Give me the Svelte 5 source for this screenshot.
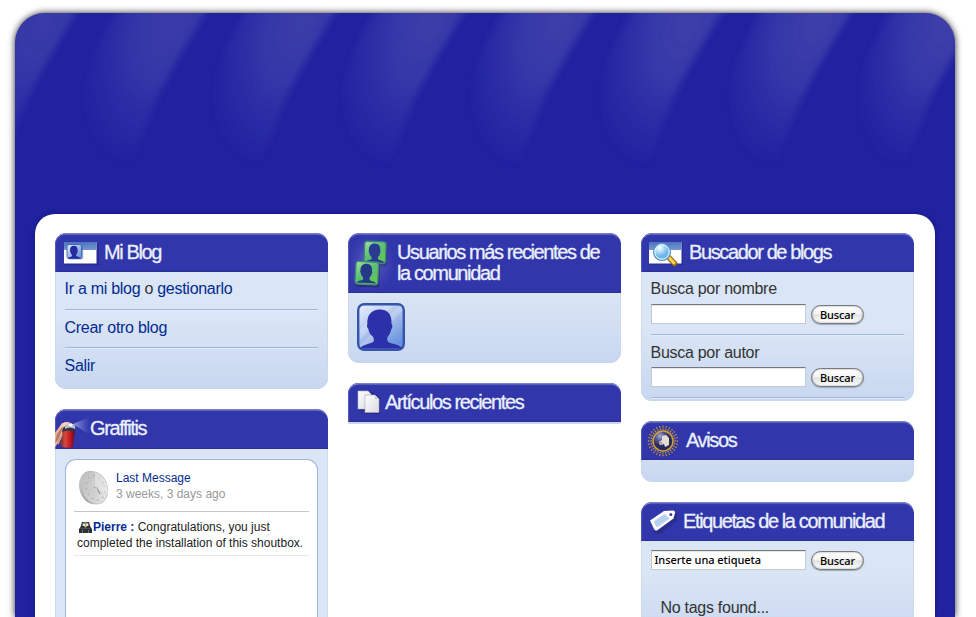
<script>
  const streaks = Array.from({ length: 8 }, (_, i) => ({
    x: (i - 1) * 129,
    o: 0.84 + i * 0.022
  }));
  const rays = Array.from({ length: 28 }, (_, i) => i * (360 / 28));
</script>

{#snippet person()}
  <path d="M0 19.500C1 17.500 5 17.200 6.300 16.300C7 15.600 6.600 14.400 6 13.400C4.600 12.400 4.200 11 4 9.800C3.200 9 3.200 8 3.500 7.300C3.200 3 5.500 .2 9.500 .2S15.300 3 15 7.300C15.600 8 15.500 9.200 14.900 10C14.600 11.600 14 12.800 13.200 13.600C12.800 14.800 12.800 15.800 13.600 16.400C15 17.300 19 17.300 20 19.500Z" />
{/snippet}

<div class="frame">
  <svg class="sky" width="940" height="190" viewBox="0 0 940 190" aria-hidden="true">
    <defs>
      <radialGradient id="glow" gradientUnits="userSpaceOnUse" cx="0" cy="0" r="1" gradientTransform="translate(158 8) rotate(20) scale(84 156)">
        <stop offset="0" stop-color="#6061b2" stop-opacity=".5" />
        <stop offset=".4" stop-color="#5a5bb6" stop-opacity=".42" />
        <stop offset=".75" stop-color="#4e50b8" stop-opacity=".2" />
        <stop offset="1" stop-color="#4547b4" stop-opacity="0" />
      </radialGradient>
      <filter id="soft" x="-20%" y="-20%" width="140%" height="140%"><feGaussianBlur stdDeviation="3.500" /></filter>
    </defs>
    {#each streaks as s}
      <g transform="translate({s.x} 0)" opacity={s.o}>
        <path filter="url(#soft)" fill="url(#glow)" d="M113 -20C84 25 70 55 69 90C68 125 78 155 105 162C122 152 124 127 140 90C155 57 181 15 203 -20Z" />
      </g>
    {/each}
  </svg>

  <main>
    <div class="col">
      <section class="box">
        <header>
          <svg class="i-blog" width="36" height="26" viewBox="0 0 36 26">
            <defs>
              <linearGradient id="bar" x2="0" y2="1"><stop stop-color="#4d73c1" /><stop offset="1" stop-color="#7797d2" /></linearGradient>
              <linearGradient id="card" x2="1" y2="1"><stop stop-color="#e5edfc" /><stop offset="1" stop-color="#5d8cda" /></linearGradient>
            </defs>
            <path fill="#242788" opacity=".7" d="M1 2h34v22.500H1z" />
            <path fill="#fff" d="M0 1h32.500v21.500H0z" />
            <path fill="url(#bar)" d="M0 1h32.500v8H0z" />
            <rect x="4.200" y="4.500" width="15" height="14" rx="2" fill="#5870a5" opacity=".6" />
            <rect x="3" y="3.500" width="14.500" height="14" rx="2" fill="url(#card)" stroke="#4069b6" />
            <g fill="#2529a2" transform="translate(3.800 4.700) scale(.65)">{@render person()}</g>
          </svg>
          <h2>Mi Blog</h2>
        </header>
        <ul class="body links">
          <li><a href="#blog">Ir a mi blog</a> o <a href="#manage">gestionarlo</a></li>
          <li><a href="#new">Crear otro blog</a></li>
          <li><a href="#exit">Salir</a></li>
        </ul>
      </section>

      <section class="box grow">
        <header class="tall">
          <svg class="i-spray" width="35" height="38" viewBox="0 0 35 38">
            <defs>
              <linearGradient id="mist"><stop stop-color="#dce5ff" stop-opacity=".6" /><stop offset="1" stop-color="#8fa0ec" stop-opacity="0" /></linearGradient>
              <linearGradient id="can"><stop stop-color="#682e35" /><stop offset=".35" stop-color="#d84a3c" /><stop offset=".65" stop-color="#c31924" /><stop offset="1" stop-color="#650b19" /></linearGradient>
            </defs>
            <path fill="url(#mist)" d="M18 14L35 7V25Z" />
            <path fill="#eab69e" d="M0 23L7 13L14 12L17 15L10 19L6 29L0 37Z" />
            <path fill="#b87764" d="M2 24L8 16L7 20L3 30L0 33Z" />
            <path fill="#f7d5bf" d="M4 18L10 12L14 12.500L9 16Z" />
            <path fill="url(#can)" d="M8 18Q14 16 20 20L18 37Q11 39 5 36Z" />
            <path fill="#303445" d="M8 18Q12 14 20 17L19 22Q13 19 7 22Z" />
            <path fill="#b9bdc6" d="M10 17Q12 12 18 14Q21 15 20 19Q15 16 10 19Z" />
            <path fill="#fff" d="M13 15L16 13L18 15L16 17Z" />
            <path stroke="#d39c87" stroke-width="2" d="M7 24L5 29M5 28L3 34" />
          </svg>
          <h2>Graffitis</h2>
        </header>
        <div class="body chatwrap">
          <div class="chat">
            <div class="last">
              <svg width="32" height="36" viewBox="0 0 32 36">
                <defs>
                  <linearGradient id="rim" x2="1" y2="1"><stop stop-color="#ddd" /><stop offset=".5" stop-color="#999" /><stop offset="1" stop-color="#d3d3d3" /></linearGradient>
                  <linearGradient id="dial" x2="1" y2="1"><stop stop-color="#bdbdbd" /><stop offset=".6" stop-color="#d3d3d3" /><stop offset="1" stop-color="#f3f3f3" /></linearGradient>
                </defs>
                <ellipse cx="14.500" cy="17.500" rx="13" ry="17" fill="url(#rim)" transform="rotate(-17 14.500 18)" />
                <ellipse cx="16.800" cy="17.800" rx="12.500" ry="16.500" fill="url(#dial)" stroke="#c2c2c2" transform="rotate(-17 17 18)" />
                <ellipse cx="17.500" cy="18" rx="9" ry="12.500" fill="none" stroke="#b0b0b0" stroke-width="1.600" stroke-dasharray="1.5 4.300" transform="rotate(-17 17.500 18)" />
                <path fill="none" stroke="#999" stroke-width="1.200" d="M16 17L19 18L22 24" />
                <path fill="#fff" opacity=".32" d="M17 2Q30 7 31 25L17 18Z" />
              </svg>
              <p><a href="#last">Last Message</a><span>3 weeks, 3 days ago</span></p>
            </div>
            <p class="msg">
              <svg width="13" height="13" viewBox="0 0 13 13">
                <path fill="#171b1d" opacity=".9" d="M3 1H10L11.500 6L13 8V12H0V8L1.500 6Z" />
                <path fill="#929792" d="M4 1.500H9L10 5H3Z" />
                <path fill="#e9e8c8" d="M4 3H6V5H4ZM7 3H9V5H7Z" />
                <path fill="#cab34b" d="M5 5H8L6.500 7Z" />
                <path fill="#697076" d="M2 7.500H11V8H2ZM3 9H4V12H3ZM9 9H10V12H9Z" />
              </svg><a href="#pierre">Pierre :</a> Congratulations, you just completed the installation of this shoutbox.
            </p>
          </div>
        </div>
      </section>
    </div>

    <div class="col">
      <section class="box">
        <header class="double">
          <svg class="i-users" width="46" height="57" viewBox="0 0 46 57">
            <defs>
              <radialGradient id="halo"><stop stop-color="#8b8bd4" stop-opacity=".7" /><stop offset="1" stop-color="#5356c2" stop-opacity="0" /></radialGradient>
              <linearGradient id="green" x2=".8" y2="1"><stop stop-color="#a3e4a1" /><stop offset=".5" stop-color="#5cbd76" /><stop offset="1" stop-color="#64c852" /></linearGradient>
            </defs>
            <ellipse cx="23" cy="29" rx="24" ry="30" fill="url(#halo)" />
            <g transform="translate(16 6.500) rotate(2)">
              <rect x="1" y="2" width="23" height="23" rx="3" fill="#27305f" opacity=".5" />
              <rect x=".7" y=".7" width="21.600" height="21.600" rx="2.500" fill="url(#green)" stroke="#3b827a" stroke-width="1.400" />
              <g fill="#283a91" transform="translate(1.800 2.500) scale(.98)">{@render person()}</g>
            </g>
            <g transform="translate(7.500 26.500) rotate(3)">
              <rect x="1" y="2" width="24" height="24" rx="3" fill="#202557" opacity=".6" />
              <rect x=".7" y=".7" width="22.600" height="22.600" rx="2.500" fill="url(#green)" stroke="#428b7c" stroke-width="1.400" />
              <g fill="#263988" transform="translate(2 2.500) scale(1)">{@render person()}</g>
            </g>
          </svg>
          <h2>Usuarios más recientes de<br />la comunidad</h2>
        </header>
        <div class="body users">
          <svg width="48" height="48" viewBox="0 0 48 48">
            <defs><linearGradient id="face" x2=".7" y2="1"><stop stop-color="#edf2ff" /><stop offset=".45" stop-color="#b5c9ef" /><stop offset="1" stop-color="#6591dc" /></linearGradient></defs>
            <rect x="1.200" y="1.200" width="45.600" height="45.600" rx="6" fill="url(#face)" stroke="#3554ab" stroke-width="2.400" />
            <path fill="#fff" opacity=".2" d="M3 27L27 3H36L3 36ZM3 42L42 3H45V8L8 45H3Z" />
            <g fill="#2c31aa" transform="translate(3 6) scale(2.100 2.030)">{@render person()}</g>
          </svg>
        </div>
      </section>

      <section class="box open">
        <header>
          <svg class="i-pages" width="24" height="24" viewBox="0 0 24 24">
            <defs><linearGradient id="paper" x2="1" y2="1"><stop stop-color="#fff" /><stop offset="1" stop-color="#d8dae0" /></linearGradient></defs>
            <path fill="#22256d" opacity=".6" d="M2 2H15L23 7V24H8V21H2Z" />
            <path fill="url(#paper)" stroke="#b5b8c9" stroke-width=".6" d="M1 1H11L14 4V19H1Z" />
            <path fill="url(#paper)" stroke="#a7aab7" stroke-width=".6" d="M8 5H18L22 9V22.500H8Z" />
            <path fill="#c6c8d0" d="M18 5V9H22Z" />
          </svg>
          <h2>Artículos recientes</h2>
        </header>
        <div class="body sliver"></div>
      </section>
    </div>

    <div class="col">
      <section class="box">
        <header>
          <svg class="i-find" width="36" height="30" viewBox="0 0 36 30">
            <defs><radialGradient id="lens" cx=".35" cy=".25"><stop stop-color="#fff" /><stop offset=".45" stop-color="#b9e1fa" /><stop offset="1" stop-color="#72b5e9" /></radialGradient></defs>
            <path fill="#252a83" opacity=".6" d="M1 2H34V24H1Z" />
            <path fill="#fff" d="M0 1H32.500V22.500H0Z" />
            <path fill="url(#bar)" d="M0 1H32.500V9H0Z" />
            <path stroke="#504a54" stroke-width="5.500" stroke-linecap="round" opacity=".45" d="M21 18L26 23" />
            <path stroke="#9b6810" stroke-width="5" stroke-linecap="round" d="M20 16.500L25.500 22.500" />
            <path stroke="#fbd550" stroke-width="3" stroke-linecap="round" d="M20 16.500L25 22" />
            <circle cx="13" cy="11" r="8.500" fill="url(#lens)" stroke="#5c95cd" stroke-width="1.200" />
            <circle cx="13" cy="11" r="7.200" fill="none" stroke="#e9f8ff" />
          </svg>
          <h2>Buscador de blogs</h2>
        </header>
        <div class="body finder">
          <form>
            <label for="name">Busca por nombre</label>
            <div class="row"><input id="name" /><button type="button">Buscar</button></div>
          </form>
          <form>
            <label for="author">Busca por autor</label>
            <div class="row"><input id="author" /><button type="button">Buscar</button></div>
          </form>
        </div>
      </section>

      <section class="box">
        <header>
          <svg class="i-news" width="32" height="32" viewBox="0 0 32 32">
            <defs><radialGradient id="orb" cx=".35" cy=".25"><stop stop-color="#a9a9d4" /><stop offset=".5" stop-color="#51518e" /><stop offset="1" stop-color="#27285e" /></radialGradient></defs>
            {#each rays as a}
              <path stroke="#b99134" stroke-width="1.300" stroke-dasharray="1.600 .8" d="M16 .8V4.800" transform="rotate({a} 16 16)" />
            {/each}
            <circle cx="16" cy="16" r="10" fill="url(#orb)" stroke="#d6a42d" stroke-width="1.500" />
            <path fill="#e4ddd0" d="M15 11L19 10L22 13V20L18 22L17 19L13 20L12 17L15 15Z" />
            <path fill="#aaa4ae" d="M12 16L15 17L16 20L12 19Z" />
          </svg>
          <h2>Avisos</h2>
        </header>
        <div class="body notice"></div>
      </section>

      <section class="box grow">
        <header>
          <svg class="i-tag" width="30" height="26" viewBox="0 0 30 26">
            <path fill="#23276f" opacity=".5" d="M2 14L16 4L28 5V12L11 25H6Z" />
            <path fill="#fff" d="M1 11.500L15 2L24.500 1.500Q26.500 2 26 4L24.500 9.500L8 21.500Q6 22 5 20Z" />
            <path fill="#b9cff0" d="M4.500 12.500L15.500 5L20.500 9.500L8 18.500Z" />
            <circle cx="21.800" cy="5.500" r="1.500" fill="#383ca0" />
          </svg>
          <h2>Etiquetas de la comunidad</h2>
        </header>
        <div class="body tags">
          <div class="row"><input value="Inserte una etiqueta" aria-label="Etiqueta" /><button type="button">Buscar</button></div>
          <p>No tags found...</p>
        </div>
      </section>
    </div>
  </main>
</div>

<style>
  :global(body) {
    margin: 0;
    background: #fff;
    overflow: hidden;
  }
  .frame {
    position: relative;
    box-sizing: border-box;
    width: 940px;
    height: 604px;
    margin: 13px 0 0 15px;
    padding: 201px 20px 0;
    border-radius: 30px 30px 0 0;
    background: #2022a0;
    box-shadow: 0 0 7px rgba(0, 0, 0, 0.85);
    overflow: hidden;
    font-family: "Liberation Sans", Arial, sans-serif;
    font-size: 16px;
    letter-spacing: -0.280px;
    color: #333;
  }
  .sky {
    position: absolute;
    top: 0;
    left: 0;
  }
  main {
    position: relative;
    box-sizing: border-box;
    display: flex;
    gap: 20px;
    height: 403px;
    padding: 19px 20px 0;
    border-radius: 20px 20px 0 0;
    background: #fff;
    box-shadow: 0 0 5px rgba(12, 14, 90, 0.5);
  }
  .col {
    display: flex;
    flex-direction: column;
    gap: 20px;
    width: 273px;
  }
  .box {
    border-radius: 11px;
    overflow: hidden;
    flex: none;
  }
  .open {
    overflow: visible;
  }
  .grow {
    border-radius: 11px 11px 0 0;
    flex: 1 1 0;
    min-height: 0;
    display: flex;
    flex-direction: column;
  }
  header {
    box-sizing: border-box;
    display: flex;
    flex: none;
    align-items: flex-start;
    height: 39px;
    background: #3136aa;
    border-radius: 11px 11px 0 0;
    box-shadow: inset 0 2px 1px -0.5px #8085cf, inset 1px 0 1px #5559b9, inset 0 -1px 1px #292c91;
  }
  header.tall {
    height: 40px;
  }
  header.double {
    height: 60px;
  }
  header svg {
    flex: none;
  }
  h2 {
    margin: 9px 0 0;
    font-size: 20px;
    font-weight: 400;
    line-height: 21px;
    letter-spacing: -1.380px;
    white-space: nowrap;
    color: #eaf0fc;
    -webkit-text-stroke: 0.300px #eaf0fc;
  }
  .i-blog { margin: 8px 4px 0 9px; }
  .i-spray { margin: 1px 0 0; }
  .i-users { margin: 1px 3px 0 0; }
  .i-pages { margin: 7px 4px 0 9px; }
  .i-find { margin: 8px 4px 0 8px; }
  .i-news { margin: 4px 7px 0 6px; }
  .i-tag { margin: 7px 4px 0 8px; }
  .body {
    box-sizing: border-box;
    margin: 0;
    background: #dae5f5 linear-gradient(#dae5f5, #c8d7f0) bottom / 100% 72px no-repeat;
    box-shadow: inset 1px 0 #ccd9ed, inset -1px 0 #ccd9ed;
  }
  a {
    color: #032b91;
    text-decoration: none;
  }
  .links {
    height: 117px;
    padding: 0 10px;
    list-style: none;
  }
  .links li {
    box-sizing: border-box;
    height: 38px;
    padding-top: 8px;
    line-height: 18px;
    border-bottom: 1px solid #9eb5dc;
    box-shadow: 0 1px #e4edf9;
    text-indent: -0.500px;
  }
  .links li + li {
    padding-top: 9px;
  }
  .links li:last-child {
    border: 0;
    box-shadow: none;
  }
  .chatwrap {
    display: flex;
    flex: 1;
    padding: 10px 10px 0;
    background: #dae5f5;
  }
  .chat {
    box-sizing: border-box;
    flex: 1;
    padding: 0 8px;
    border: 1px solid #9db7e0;
    border-bottom: 0;
    border-radius: 11px 11px 0 0;
    background: #fff;
    font-size: 12px;
    letter-spacing: 0;
  }
  .last {
    box-sizing: border-box;
    display: flex;
    gap: 6px;
    height: 52px;
    padding: 10px 0 0 4px;
    border-bottom: 1px solid #c6c6c6;
  }
  .last p {
    margin: 0;
    line-height: 16px;
  }
  .last a,
  .last span {
    display: block;
  }
  .last span {
    color: #999;
  }
  .msg {
    margin: 0;
    padding: 7px 0 4px 3px;
    line-height: 16px;
    border-bottom: 1px solid #e9e9e9;
    color: #222;
  }
  .msg svg {
    vertical-align: -3px;
    margin-left: 2px;
  }
  .msg a {
    margin-left: 1px;
    font-weight: 700;
  }
  .users {
    height: 70px;
    padding: 10px 9px;
  }
  .sliver {
    height: 2px;
    background: #c8d7ee;
    border-radius: 0 0 11px 11px;
  }
  .finder {
    height: 129px;
    padding: 0 10px;
  }
  form {
    box-sizing: border-box;
    height: 63px;
    padding-top: 8px;
    border-bottom: 1px solid #9eb9dc;
    box-shadow: 0 1px #e2ebf8;
  }
  form + form {
    padding-top: 9px;
  }
  label {
    display: block;
    line-height: 18px;
    text-indent: -0.500px;
  }
  .row {
    display: flex;
    align-items: flex-start;
    gap: 5px;
    margin-top: 6px;
  }
  form + form .row {
    margin-top: 5px;
  }
  input {
    box-sizing: border-box;
    width: 155px;
    height: 20px;
    margin: 0;
    padding: 0 3px 1px 2.500px;
    border: 1px solid #c5c9d0;
    border-top-color: #747980;
    border-radius: 0;
    background: #fff;
    box-shadow: inset 0 1px #e8e8e8;
    font: 500 11px "Noto Sans", sans-serif;
    letter-spacing: -0.050px;
    color: #000;
  }
  button {
    box-sizing: border-box;
    width: 53px;
    height: 19px;
    margin-top: 1px;
    padding: 0;
    border: 1px solid #77797f;
    border-radius: 10px;
    background: linear-gradient(#fff, #f5f5f5 45%, #e3e3e3 52%, #fff);
    box-shadow: inset 0 0 2px #888, 0 1px 1px #9da7b7;
    font: 500 11px/15px "Noto Sans", sans-serif;
    letter-spacing: -0.150px;
    color: #000;
  }
  .notice {
    height: 22px;
    background: linear-gradient(#cfdcf2, #c8d7f0);
  }
  .tags {
    flex: 1;
    padding: 3px 10px 0;
    background: linear-gradient(#dae5f5 30px, #c8d7f0 102px);
  }
  .tags p {
    margin: 29px 0 0 9.500px;
    line-height: 18px;
  }
</style>
